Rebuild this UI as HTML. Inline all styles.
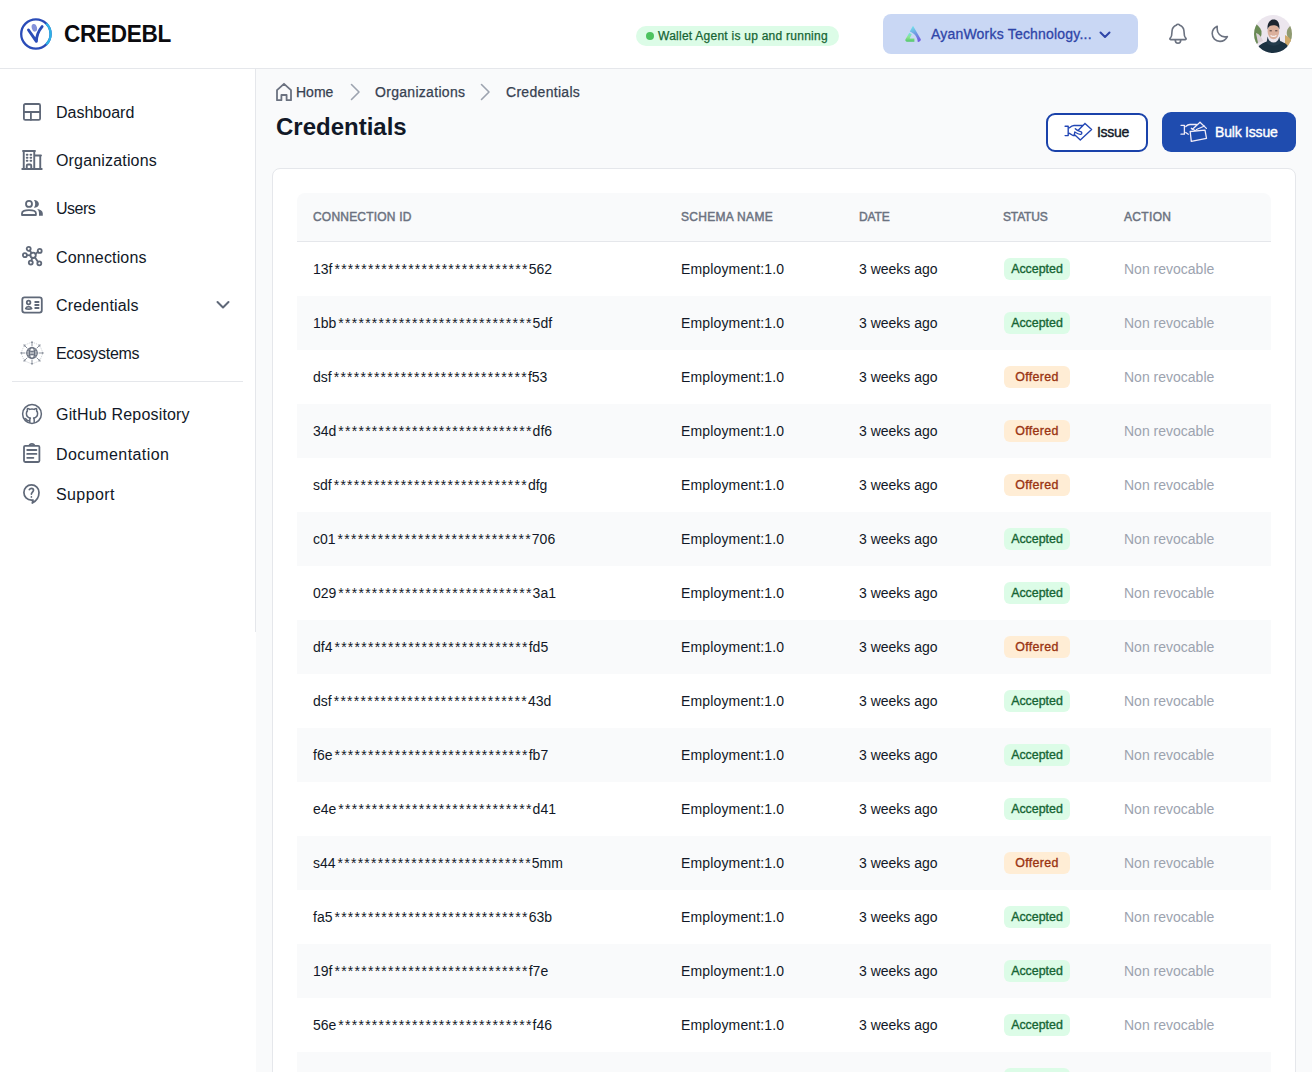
<!DOCTYPE html>
<html><head><meta charset="utf-8"><style>
*{box-sizing:border-box;margin:0;padding:0}
html,body{width:1312px;height:1072px;overflow:hidden;background:#fff;font-family:"Liberation Sans",sans-serif;color:#111827}
#hdr{position:absolute;left:0;top:0;width:1312px;height:69px;border-bottom:1px solid #e5e7eb;background:#fff}
#side{position:absolute;left:0;top:69px;width:256px;height:563px;border-right:1px solid #e5e7eb;background:#fff}
#main{position:absolute;left:256px;top:69px;width:1056px;height:1003px;background:#f9fafb}
.t{position:absolute;white-space:nowrap;line-height:1}
.nav{font-size:16px;color:#111827;left:56px}
svg{position:absolute;overflow:visible}
.ic{fill:none;stroke:#5f6878;stroke-width:1.8;stroke-linecap:round;stroke-linejoin:round}
#card{position:absolute;left:272px;top:168px;width:1024px;height:920px;background:#fff;border:1px solid #e5e7eb;border-radius:8px}
#thead{position:absolute;left:297px;top:193px;width:974px;height:49px;background:#f9fafb;border-bottom:1px solid #e5e7eb;border-radius:8px 8px 0 0}
.th{position:absolute;top:211px;font-size:12px;color:#6b7280;white-space:nowrap;line-height:1;-webkit-text-stroke:0.45px #6b7280}
.row{position:absolute;left:297px;width:974px;height:54px}
.row.s{background:#f9fafb}
.td{position:absolute;top:20px;font-size:14px;white-space:nowrap;line-height:1;color:#111827}
.st{letter-spacing:1.25px;margin-left:2px}
.badge{position:absolute;top:16px;left:707px;width:66px;height:22px;border-radius:6px;font-size:12.4px;line-height:22px;text-align:center;-webkit-text-stroke:0.35px currentColor}
.badge.off{letter-spacing:0.35px}
.acc{background:#dcfce7;color:#166534}
.off{background:#ffedd5;color:#9a3412}
.na{color:#9ca3af}
</style></head><body>
<div id="hdr"></div><div id="side"></div><div id="main"></div>
<svg style="left:18px;top:16px" width="36" height="36" viewBox="0 0 36 36">
<circle cx="17.9" cy="18" r="14.7" fill="none" stroke="#2a4cb8" stroke-width="2.3"/>
<path d="M28.3 7.6 A14.7 14.7 0 0 1 28.3 28.4" fill="none" stroke="#2eb2e6" stroke-width="2.3"/>
<path d="M10.5 14 L18.4 25.3 C18.5 20.5 20.5 14.8 24.1 10.6" fill="none" stroke="#2a4cb8" stroke-width="2.9" stroke-linecap="round" stroke-linejoin="round"/>
<ellipse cx="16.3" cy="11.8" rx="2.6" ry="3.9" fill="#8492da" transform="rotate(-15 16.3 11.6)"/>
</svg>
<div class="t" style="left:64px;top:22px;font-size:24px;font-weight:bold;color:#0b0b0f;letter-spacing:-0.3px;transform:scaleX(0.94);transform-origin:0 0">CREDEBL</div>
<div style="position:absolute;left:636px;top:26px;width:203px;height:20px;border-radius:10px;background:#dcfce7"></div>
<div style="position:absolute;left:646px;top:32px;width:8px;height:8px;border-radius:4px;background:#4cc35f"></div>
<div class="t" style="left:658px;top:30px;font-size:12px;color:#166534;-webkit-text-stroke:0.25px #166534;letter-spacing:0.25px">Wallet Agent is up and running</div>
<div style="position:absolute;left:883px;top:14px;width:255px;height:40px;border-radius:8px;background:#c9d7f4"></div>
<svg style="left:898px;top:20px" width="30" height="28" viewBox="0 0 30 28">
<defs><linearGradient id="lg1" x1="15" y1="6" x2="22" y2="21" gradientUnits="userSpaceOnUse"><stop offset="0" stop-color="#70e2ea"/><stop offset="0.5" stop-color="#6f97e2"/><stop offset="1" stop-color="#7356e0"/></linearGradient>
<linearGradient id="lg2" x1="0" y1="13" x2="0" y2="22" gradientUnits="userSpaceOnUse"><stop offset="0" stop-color="#70e2e6"/><stop offset="0.45" stop-color="#8ee58e"/><stop offset="1" stop-color="#4fc46a"/></linearGradient></defs>
<path d="M15 5.8 L22.8 19.3 C23.1 20.6 21.6 21.9 19.8 21.9 C19.4 17 16.5 13.5 11.8 11.6 Z" fill="url(#lg1)"/>
<path d="M11.3 12.8 L13.8 14.3 L11.7 18.5 H16.4 V21.8 H9 C7.8 21.8 7 20.8 7.4 19.6 Z" fill="url(#lg2)"/>
</svg>
<div class="t" style="left:931px;top:27px;font-size:14px;color:#2f45a8;-webkit-text-stroke:0.3px #2f45a8;letter-spacing:0.2px">AyanWorks Technology...</div>
<svg style="left:1098px;top:29px" width="14" height="12" viewBox="0 0 14 12"><path d="M2.5 3.5 L7 8 L11.5 3.5" fill="none" stroke="#2f45a8" stroke-width="2" stroke-linecap="round" stroke-linejoin="round"/></svg>
<svg style="left:1165px;top:20px" width="26" height="28" viewBox="0 0 26 28">
<path d="M13 4.2 C12 4.2 11.6 4.6 11.2 5.2 C9 6.2 7.3 7.8 7.1 10.5 L6.6 15.5 C6.5 16.6 5.6 17.6 5 18.4 C4.6 19 4.9 19.6 5.6 19.6 H20.4 C21.1 19.6 21.4 19 21 18.4 C20.4 17.6 19.5 16.6 19.4 15.5 L18.9 10.5 C18.7 7.8 17 6.2 14.8 5.2 C14.4 4.6 14 4.2 13 4.2 Z M10.2 19.8 C10.2 21.9 11.4 23.2 13 23.2 C14.6 23.2 15.8 21.9 15.8 19.8" fill="none" stroke="#6b7280" stroke-width="1.6" stroke-linecap="round" stroke-linejoin="round"/>
</svg>
<svg style="left:1208px;top:22px" width="24" height="24" viewBox="0 0 24 24">
<path d="M9.2 4.2 C6.8 5.3 4.2 7.8 4.2 11.6 C4.2 16 7.6 19.4 12 19.4 C15.3 19.4 17.9 17.4 19.4 14.6 C18.7 14.8 17.6 14.9 16.8 14.9 C12.5 14.9 9.2 11.2 9.2 7.2 C9.2 6.2 9.1 5.2 9.2 4.2 Z" fill="none" stroke="#6b7280" stroke-width="1.6" stroke-linejoin="round"/>
</svg>
<svg style="left:1254px;top:15px" width="38" height="38" viewBox="0 0 38 38">
<defs><clipPath id="av"><circle cx="19" cy="19" r="19"/></clipPath></defs>
<g clip-path="url(#av)">
<rect width="38" height="38" fill="#ece6ee"/>
<path d="M0 8 C3 9 6 12 7.5 16 C8 20 6.5 25 3 29 L0 30 Z" fill="#6a8a55"/>
<path d="M2 18 C5 19 8 22 9 26 L4 28 Z" fill="#dcd2d8"/>
<path d="M38 10 C34 12 32 16 33 20 C34 24 36 27 38 28 Z" fill="#8f9a70"/>
<path d="M31 20 C33 21 36 23 38 26 L38 32 L31 30 Z" fill="#cfa86a"/>
<path d="M1 38 C2 32 7 28.5 13 26.5 L19.5 29.5 L25.5 26 C31 27.5 35 30 37 38 Z" fill="#1b3141"/>
<path d="M13.6 21.5 C14.5 25.5 16.5 27.5 19.5 27.5 C22.5 27.5 24.5 25.5 25.3 21.5 L26.5 28 C23 31.5 16 31.5 12.5 28 Z" fill="#233a4b"/>
<ellipse cx="19.4" cy="16.4" rx="5.8" ry="7.8" fill="#dbb09c"/>
<path d="M13.6 14.5 C13 7.8 16 4.4 19.6 4.4 C23.5 4.4 26 7.6 25.3 14.5 C24.6 11.2 22.5 10.2 19.5 10.2 C16.5 10.2 14.5 11.2 13.6 14.5 Z" fill="#1c2530"/>
<path d="M16.6 20.4 C18 21.8 21 21.8 22.4 20.4" fill="none" stroke="#f7f2f2" stroke-width="1.3"/>
<path d="M15.6 15.8 H17.8 M21.2 15.8 H23.4" stroke="#3a2c2c" stroke-width="0.9"/>
</g>
</svg>
<div class="t nav" style="top:105px;letter-spacing:0px">Dashboard</div>
<div class="t nav" style="top:153px;letter-spacing:0.17px">Organizations</div>
<div class="t nav" style="top:201px;letter-spacing:-0.5px">Users</div>
<div class="t nav" style="top:250px;letter-spacing:0.15px">Connections</div>
<div class="t nav" style="top:298px;letter-spacing:0.15px">Credentials</div>
<div class="t nav" style="top:346px;letter-spacing:-0.3px">Ecosystems</div>
<div class="t nav" style="top:407px;letter-spacing:0.18px">GitHub Repository</div>
<div class="t nav" style="top:447px;letter-spacing:0.45px">Documentation</div>
<div class="t nav" style="top:487px;letter-spacing:0.4px">Support</div>
<div style="position:absolute;left:12px;top:381px;width:231px;height:1px;background:#e5e7eb"></div>
<svg style="left:18px;top:98px" width="30" height="28" viewBox="0 0 30 28" class="ic">
<rect x="5.9" y="6" width="16.2" height="15.8" rx="1.4"/><path d="M5.9 14 H22.1 M12.9 14 V21.8"/></svg>
<svg style="left:20px;top:148px" width="24" height="24" viewBox="0 0 24 24" class="ic" style="stroke-width:1.6">
<path d="M2.25 21h19.5m-18-18v18m10.5-18v18m6-13.5V21M6.75 6.75h.75m-.75 3h.75m-.75 3h.75m3-6h.75m-.75 3h.75m-.75 3h.75M6.75 21v-3.375c0-.621.504-1.125 1.125-1.125h2.25c.621 0 1.125.504 1.125 1.125V21M3 3h12m-.75 4.5H21" stroke-width="1.9"/></svg>
<svg style="left:18px;top:194px" width="30" height="28" viewBox="0 0 30 28">
<circle cx="11" cy="9.9" r="3" fill="none" stroke="#5f6878" stroke-width="1.8"/>
<path d="M4 21 H17.9 V19.2 C17.9 17 15.2 16.2 11 16.2 C6.8 16.2 4 17 4 19.2 Z" fill="none" stroke="#5f6878" stroke-width="1.8" stroke-linejoin="round"/>
<path d="M15.9 6 C19 6 20.9 7.8 20.9 9.9 C20.9 12 19 13.7 15.9 13.7 C16.8 12.5 17.2 11.2 17.2 9.9 C17.2 8.5 16.8 7.2 15.9 6 Z" fill="#5f6878"/>
<path d="M19 15.1 C22.6 15.6 24.8 17.2 24.8 19.5 L24.8 21.8 L21 21.8 L21 19.5 C21 17.5 20.3 16.2 19 15.1 Z" fill="#5f6878"/>
</svg>
<svg style="left:18px;top:242px" width="30" height="28" viewBox="0 0 30 28" class="ic" style="stroke-width:1.7">
<circle cx="15.1" cy="13.3" r="2.7"/><circle cx="10.7" cy="6.8" r="2"/><circle cx="21.7" cy="8.9" r="2"/><circle cx="6.9" cy="13.2" r="2"/><circle cx="12.8" cy="20.6" r="2"/><circle cx="21.3" cy="21.3" r="2"/>
<path d="M11.8 8.6 L13.6 11 M19.9 9.9 L17.5 12 M8.9 13.2 L12.4 13.3 M13.3 18.7 L14.3 15.9 M19.9 19.8 L17 15.4"/></svg>
<svg style="left:18px;top:291px" width="30" height="28" viewBox="0 0 30 28" class="ic">
<rect x="4.3" y="6.4" width="19.5" height="15.2" rx="2.3"/><circle cx="10.6" cy="11.5" r="1.8"/>
<path d="M7.8 17.6 C8.3 15.9 9.3 15.6 10.6 15.6 C11.9 15.6 13 15.9 13.6 17.6 C12.8 18.2 8.5 18.2 7.8 17.6 Z M17.2 11 H20.6 M17.2 14 H20.6 M17.2 17 H20.6"/></svg>
<svg style="left:213px;top:297px" width="20" height="16" viewBox="0 0 20 16"><path d="M4.5 5 L10 10.5 L15.5 5" fill="none" stroke="#5f6878" stroke-width="2" stroke-linecap="round" stroke-linejoin="round"/></svg>
<svg style="left:16px;top:337px" width="32" height="32" viewBox="0 0 32 32">
<path d="M16.00 5.00 L23.78 8.22 L27.00 16.00 L23.78 23.78 L16.00 27.00 L8.22 23.78 L5.00 16.00 L8.22 8.22 Z" fill="none" stroke="#c2c6cd" stroke-width="0.8" stroke-dasharray="1.2 1"/>
<g fill="none" stroke="#6b7280" stroke-width="1.2">
<circle cx="16" cy="16" r="5.3"/><ellipse cx="16" cy="16" rx="2.6" ry="5.3"/>
<path d="M11.4 13.6 C14 14.5 18 14.5 20.6 13.6 M10.7 16 H21.3 M11.4 18.4 C14 17.5 18 17.5 20.6 18.4"/>
</g>
<path d="M16.00 9.40 L16.00 5.60 M20.67 11.33 L23.35 8.65 M22.60 16.00 L26.40 16.00 M20.67 20.67 L23.35 23.35 M16.00 22.60 L16.00 26.40 M11.33 20.67 L8.65 23.35 M9.40 16.00 L5.60 16.00 M11.33 11.33 L8.65 8.65" fill="none" stroke="#8d939e" stroke-width="1"/>
<path d="M16.00 3.80 L17.30 6.10 L14.70 6.10 Z M24.63 7.37 L23.92 9.92 L22.08 8.08 Z M28.20 16.00 L25.90 17.30 L25.90 14.70 Z M24.63 24.63 L22.08 23.92 L23.92 22.08 Z M16.00 28.20 L14.70 25.90 L17.30 25.90 Z M7.37 24.63 L8.08 22.08 L9.92 23.92 Z M3.80 16.00 L6.10 14.70 L6.10 17.30 Z M7.37 7.37 L9.92 8.08 L8.08 9.92 Z" fill="#8d939e"/>
</svg>
<svg style="left:18px;top:400px" width="28" height="28" viewBox="0 0 28 28" class="ic" style="">
<circle cx="14" cy="14" r="9.4" fill="none" stroke="#5f6878" stroke-width="1.5"/>
<path d="M11.8 22.6 V19.8 C11.8 19 12.1 18.4 12.4 18 C10 17.6 8.4 16.3 8.4 13.4 C8.4 12.4 8.8 11.5 9.4 10.9 C9.2 10.2 9.2 9.2 9.5 8.5 C10.4 8.5 11.2 8.9 11.8 9.4 C13.2 9 14.8 9 16.2 9.4 C16.8 8.9 17.6 8.5 18.5 8.5 C18.8 9.2 18.8 10.2 18.6 10.9 C19.2 11.5 19.6 12.4 19.6 13.4 C19.6 16.3 18 17.6 15.6 18 C15.9 18.4 16.2 19 16.2 19.8 V22.6 M11.8 20.6 C9.8 21.2 8.6 20.4 7.6 18.6" fill="none" stroke="#5f6878" stroke-width="1.5" stroke-linecap="round" stroke-linejoin="round"/>
</svg>
<svg style="left:18px;top:439px" width="28" height="28" viewBox="0 0 28 28" class="ic">
<path d="M11.4 6.9 H7.2 C6.5 6.9 6 7.4 6 8.1 V21.8 C6 22.5 6.5 23 7.2 23 H20.2 C20.9 23 21.4 22.5 21.4 21.8 V8.1 C21.4 7.4 20.9 6.9 20.2 6.9 H16.4 M11.4 6.9 C11.6 5.6 12.6 4.9 13.9 4.9 C15.2 4.9 16.2 5.6 16.4 6.9 Z M9.2 11 H18.4 M9.2 14.9 H18.4 M9.2 18.8 H15.4"/></svg>
<svg style="left:18px;top:479px" width="28" height="28" viewBox="0 0 28 28" class="ic" style="">
<path d="M15 21 C14.5 21.1 14 21.1 13.4 21.1 C9.2 21.1 5.9 17.7 5.9 13.4 C5.9 9.2 9.2 5.9 13.4 5.9 C17.7 5.9 21 9.2 21 13.4 C21 17.6 18.4 21.8 14.3 24 Z M11.3 10.6 C11.8 9.8 12.6 9.3 13.5 9.3 C14.7 9.3 15.5 10.1 15.5 11.2 C15.5 12.6 13.4 13.6 13.4 15.1 M13.4 17.9 V18" fill="none" stroke="#5f6878" stroke-width="1.7" stroke-linecap="round" stroke-linejoin="round"/></svg>
<svg style="left:274px;top:80px" width="20" height="24" viewBox="0 0 20 24">
<path d="M3 20.2 V10.2 L10 3.8 L17 10.2 V20.2 H12.6 V15 H7.4 V20.2 Z" fill="none" stroke="#6b7280" stroke-width="1.8" stroke-linejoin="round"/></svg>
<div class="t" style="left:296px;top:85px;font-size:14px;color:#374151;-webkit-text-stroke:0.25px #374151">Home</div>
<svg style="left:346px;top:82px" width="18" height="20" viewBox="0 0 18 20"><path d="M5.5 2.5 L13 10 L5.5 17.5" fill="none" stroke="#9ca3af" stroke-width="1.6" stroke-linecap="round" stroke-linejoin="round"/></svg>
<div class="t" style="left:375px;top:85px;font-size:14px;color:#374151;-webkit-text-stroke:0.25px #374151;letter-spacing:0.3px">Organizations</div>
<svg style="left:476px;top:82px" width="18" height="20" viewBox="0 0 18 20"><path d="M5.5 2.5 L13 10 L5.5 17.5" fill="none" stroke="#9ca3af" stroke-width="1.6" stroke-linecap="round" stroke-linejoin="round"/></svg>
<div class="t" style="left:506px;top:85px;font-size:14px;color:#374151;-webkit-text-stroke:0.25px #374151;letter-spacing:0.3px">Credentials</div>
<div class="t" style="left:276px;top:115px;font-size:24px;font-weight:bold;color:#111827">Credentials</div>
<div style="position:absolute;left:1046px;top:113px;width:102px;height:39px;border:2px solid #1a42aa;border-radius:9px;background:#fff"></div>
<svg style="left:1060px;top:118px" width="36" height="28" viewBox="0 0 36 28">
<path d="M5.1 8.2 H8.2 V17.6 H5.1 M9.5 9.8 C11 8.3 12.5 7.5 14 7.5 H22.5 M25 5.5 L31.6 11.5 L20.3 22 L15.2 17.3 M25 5.5 L18 12.6 M15.3 10.7 C16.5 12 18.5 13.3 20.6 13.6 C22 13.8 22.3 15.8 20.8 16.3 C19 16.8 16.3 15 14.8 14 L14.2 17.4 M9.4 15.3 L13 17.5 L15.2 17.3" fill="none" stroke="#2347b5" stroke-width="1.4" stroke-linecap="round" stroke-linejoin="round"/></svg>
<div class="t" style="left:1097px;top:125px;font-size:14px;color:#111827;letter-spacing:-0.3px;-webkit-text-stroke:0.4px #111827">Issue</div>
<div style="position:absolute;left:1162px;top:112px;width:134px;height:40px;border-radius:9px;background:#1f4caf"></div>
<svg style="left:1176px;top:116px" width="36" height="30" viewBox="0 0 36 30">
<path d="M5 9.3 H8.4 V18.2 H5 M9.8 10.5 C11 9.3 12.3 8.5 14 8.5 H20.5 M24 6.2 L30.4 12.4 M24 6.2 L16.2 13.5 M20.5 13.5 L28.5 10 M14.2 15.5 L29 14.2 L30.5 22.3 L15.3 25.4 Z M9.8 16.5 L12.3 18.2 M15.3 12.3 C16.6 13.3 18 14.2 19.5 14.6" fill="none" stroke="#f1ecf8" stroke-width="1.3" stroke-linecap="round" stroke-linejoin="round"/></svg>
<div class="t" style="left:1215px;top:125px;font-size:14px;color:#fff;letter-spacing:-0.2px;-webkit-text-stroke:0.4px #fff">Bulk Issue</div>
<div id="card"></div><div id="thead"></div>
<div class="th" style="left:313px;letter-spacing:0.2px">CONNECTION ID</div>
<div class="th" style="left:681px;letter-spacing:0.3px">SCHEMA NAME</div>
<div class="th" style="left:859px;letter-spacing:-0.1px">DATE</div>
<div class="th" style="left:1003px;letter-spacing:-0.15px">STATUS</div>
<div class="th" style="left:1124px;letter-spacing:0.34px">ACTION</div>
<div class="row" style="top:242px"><div class="td" style="left:16px">13f<span class="st">*****************************</span>562</div><div class="td" style="left:384px;letter-spacing:0.15px">Employment:1.0</div><div class="td" style="left:562px">3 weeks ago</div><div class="badge acc">Accepted</div><div class="td na" style="left:827px">Non revocable</div></div>
<div class="row s" style="top:296px"><div class="td" style="left:16px">1bb<span class="st">*****************************</span>5df</div><div class="td" style="left:384px;letter-spacing:0.15px">Employment:1.0</div><div class="td" style="left:562px">3 weeks ago</div><div class="badge acc">Accepted</div><div class="td na" style="left:827px">Non revocable</div></div>
<div class="row" style="top:350px"><div class="td" style="left:16px">dsf<span class="st">*****************************</span>f53</div><div class="td" style="left:384px;letter-spacing:0.15px">Employment:1.0</div><div class="td" style="left:562px">3 weeks ago</div><div class="badge off">Offered</div><div class="td na" style="left:827px">Non revocable</div></div>
<div class="row s" style="top:404px"><div class="td" style="left:16px">34d<span class="st">*****************************</span>df6</div><div class="td" style="left:384px;letter-spacing:0.15px">Employment:1.0</div><div class="td" style="left:562px">3 weeks ago</div><div class="badge off">Offered</div><div class="td na" style="left:827px">Non revocable</div></div>
<div class="row" style="top:458px"><div class="td" style="left:16px">sdf<span class="st">*****************************</span>dfg</div><div class="td" style="left:384px;letter-spacing:0.15px">Employment:1.0</div><div class="td" style="left:562px">3 weeks ago</div><div class="badge off">Offered</div><div class="td na" style="left:827px">Non revocable</div></div>
<div class="row s" style="top:512px"><div class="td" style="left:16px">c01<span class="st">*****************************</span>706</div><div class="td" style="left:384px;letter-spacing:0.15px">Employment:1.0</div><div class="td" style="left:562px">3 weeks ago</div><div class="badge acc">Accepted</div><div class="td na" style="left:827px">Non revocable</div></div>
<div class="row" style="top:566px"><div class="td" style="left:16px">029<span class="st">*****************************</span>3a1</div><div class="td" style="left:384px;letter-spacing:0.15px">Employment:1.0</div><div class="td" style="left:562px">3 weeks ago</div><div class="badge acc">Accepted</div><div class="td na" style="left:827px">Non revocable</div></div>
<div class="row s" style="top:620px"><div class="td" style="left:16px">df4<span class="st">*****************************</span>fd5</div><div class="td" style="left:384px;letter-spacing:0.15px">Employment:1.0</div><div class="td" style="left:562px">3 weeks ago</div><div class="badge off">Offered</div><div class="td na" style="left:827px">Non revocable</div></div>
<div class="row" style="top:674px"><div class="td" style="left:16px">dsf<span class="st">*****************************</span>43d</div><div class="td" style="left:384px;letter-spacing:0.15px">Employment:1.0</div><div class="td" style="left:562px">3 weeks ago</div><div class="badge acc">Accepted</div><div class="td na" style="left:827px">Non revocable</div></div>
<div class="row s" style="top:728px"><div class="td" style="left:16px">f6e<span class="st">*****************************</span>fb7</div><div class="td" style="left:384px;letter-spacing:0.15px">Employment:1.0</div><div class="td" style="left:562px">3 weeks ago</div><div class="badge acc">Accepted</div><div class="td na" style="left:827px">Non revocable</div></div>
<div class="row" style="top:782px"><div class="td" style="left:16px">e4e<span class="st">*****************************</span>d41</div><div class="td" style="left:384px;letter-spacing:0.15px">Employment:1.0</div><div class="td" style="left:562px">3 weeks ago</div><div class="badge acc">Accepted</div><div class="td na" style="left:827px">Non revocable</div></div>
<div class="row s" style="top:836px"><div class="td" style="left:16px">s44<span class="st">*****************************</span>5mm</div><div class="td" style="left:384px;letter-spacing:0.15px">Employment:1.0</div><div class="td" style="left:562px">3 weeks ago</div><div class="badge off">Offered</div><div class="td na" style="left:827px">Non revocable</div></div>
<div class="row" style="top:890px"><div class="td" style="left:16px">fa5<span class="st">*****************************</span>63b</div><div class="td" style="left:384px;letter-spacing:0.15px">Employment:1.0</div><div class="td" style="left:562px">3 weeks ago</div><div class="badge acc">Accepted</div><div class="td na" style="left:827px">Non revocable</div></div>
<div class="row s" style="top:944px"><div class="td" style="left:16px">19f<span class="st">*****************************</span>f7e</div><div class="td" style="left:384px;letter-spacing:0.15px">Employment:1.0</div><div class="td" style="left:562px">3 weeks ago</div><div class="badge acc">Accepted</div><div class="td na" style="left:827px">Non revocable</div></div>
<div class="row" style="top:998px"><div class="td" style="left:16px">56e<span class="st">*****************************</span>f46</div><div class="td" style="left:384px;letter-spacing:0.15px">Employment:1.0</div><div class="td" style="left:562px">3 weeks ago</div><div class="badge acc">Accepted</div><div class="td na" style="left:827px">Non revocable</div></div>
<div class="row s" style="top:1052px"><div class="td" style="left:16px">xxx<span class="st">*****************************</span>xxx</div><div class="td" style="left:384px;letter-spacing:0.15px">Employment:1.0</div><div class="td" style="left:562px">3 weeks ago</div><div class="badge acc">Accepted</div><div class="td na" style="left:827px">Non revocable</div></div>
</body></html>
